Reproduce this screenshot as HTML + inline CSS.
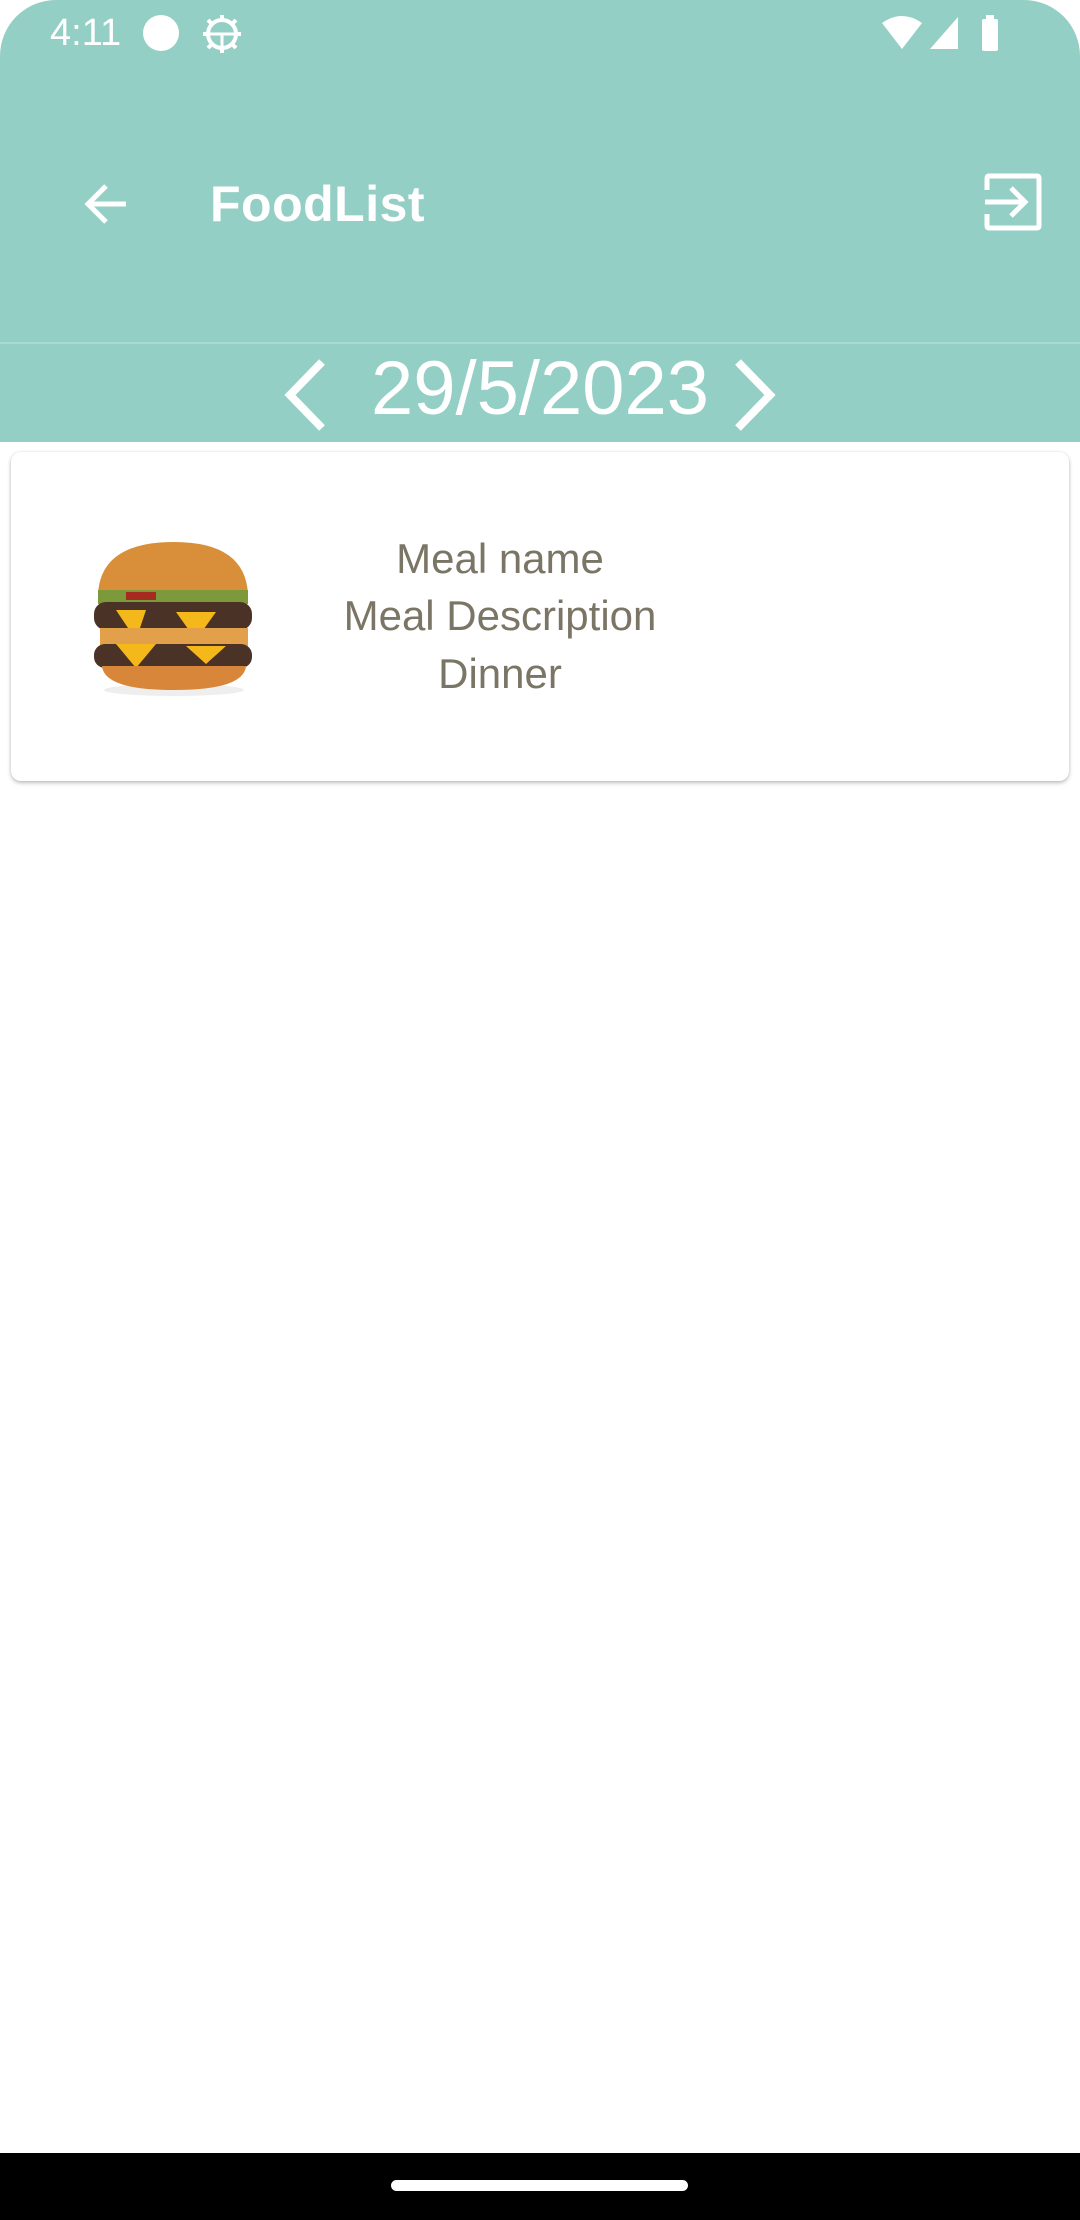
<!DOCTYPE html>
<html><head><meta charset="utf-8"><style>
*{margin:0;padding:0;box-sizing:border-box}
body{width:1080px;height:2220px;background:#fff;position:relative;overflow:hidden;font-family:"Liberation Sans",sans-serif}
.top{position:absolute;left:0;top:0;width:1080px;height:442px;background:#94cfc5;border-radius:56px 56px 0 0}
.div{position:absolute;left:0;top:342px;width:1080px;height:2px;background:#a9d9d1}
.t{position:absolute;color:#fff}
.card{position:absolute;left:11px;top:452px;width:1058px;height:329px;background:#fff;border-radius:10px;box-shadow:0 2px 4px rgba(0,0,0,.25),0 0 2px rgba(0,0,0,.08)}
.txt{position:absolute;left:300px;width:400px;text-align:center;color:#7a7565;font-size:42px}
.nav{position:absolute;left:0;top:2153px;width:1080px;height:67px;background:#000}
.h{position:absolute;left:391px;top:2180px;width:297px;height:11px;border-radius:6px;background:#fff}
</style></head><body>
<div class="top"></div>
<div class="div"></div>
<div class="t" style="left:50px;top:12px;font-size:38px">4:11</div>
<div style="position:absolute;left:143px;top:15px;width:36px;height:36px;border-radius:50%;background:#fff"></div>
<svg style="position:absolute;left:202px;top:14px" width="40" height="40" viewBox="0 0 40 40"><circle cx="20" cy="20" r="14" fill="none" stroke="#fff" stroke-width="4"/><path d="M6 20H34M20 20V34" stroke="#fff" stroke-width="3"/><g stroke="#fff" stroke-width="4"><path d="M20 1v5M20 34v5M1 20h5M34 20h5M6 6l4 4M30 30l4 4M34 6l-4 4M6 34l4-4"/></g></svg>
<svg style="position:absolute;left:880px;top:15px" width="130" height="38" viewBox="0 0 130 38"><path d="M2 8Q22 -6 42 8L22 34Z" fill="#fff"/><path d="M50 34L78 2V34Z" fill="#fff"/><rect x="102" y="4" width="16" height="32" rx="2" fill="#fff"/><rect x="106" y="0" width="8" height="6" fill="#fff"/></svg>
<svg style="position:absolute;left:84px;top:182px" width="46" height="44" viewBox="0 0 46 44"><path d="M42 22H6M22 4L4 22l18 18" fill="none" stroke="#fff" stroke-width="5"/></svg>
<div class="t" style="left:210px;top:175px;font-size:50px;font-weight:bold;letter-spacing:0.5px">FoodList</div>
<svg style="position:absolute;left:983px;top:172px" width="60" height="60" viewBox="0 0 60 60"><path d="M4 18V6Q4 4 6 4h48q2 0 2 2v48q0 2-2 2H6q-2 0-2-2V42" fill="none" stroke="#fff" stroke-width="5"/><path d="M2 30h38M28 16l14 14-14 14" fill="none" stroke="#fff" stroke-width="5"/></svg>
<svg style="position:absolute;left:278px;top:358px" width="50" height="74" viewBox="0 0 50 74"><path d="M44 4L12 37l32 33" fill="none" stroke="#fff" stroke-width="8"/></svg>
<svg style="position:absolute;left:732px;top:358px" width="50" height="74" viewBox="0 0 50 74"><path d="M6 4l32 33-32 33" fill="none" stroke="#fff" stroke-width="8"/></svg>
<div class="t" style="left:340px;width:400px;text-align:center;top:345px;font-size:76px">29/5/2023</div>
<div class="card"></div>
<svg style="position:absolute;left:86px;top:540px" width="180" height="160" viewBox="0 0 180 160">
<ellipse cx="88" cy="150" rx="70" ry="6" fill="#eee"/>
<path d="M12 55Q14 2 88 2Q160 2 162 55Z" fill="#d98f3a"/>
<rect x="12" y="50" width="150" height="14" fill="#7c9a3c"/>
<rect x="40" y="52" width="30" height="8" fill="#a52a20"/>
<rect x="8" y="62" width="158" height="28" rx="12" fill="#4a3226"/>
<path d="M30 70L60 70L50 100ZM90 72L130 72L110 100Z" fill="#f5b81a"/>
<rect x="14" y="88" width="148" height="18" fill="#e3a04b"/>
<rect x="8" y="104" width="158" height="24" rx="11" fill="#4a3226"/>
<path d="M30 104L70 104L50 128ZM100 106L140 106L120 124Z" fill="#f5b81a"/>
<path d="M16 126H160Q158 150 88 150Q18 150 16 126Z" fill="#d8873a"/>
</svg>
<div class="txt" style="top:535px">Meal name</div>
<div class="txt" style="top:592px">Meal Description</div>
<div class="txt" style="top:650px">Dinner</div>
<div class="nav"></div><div class="h"></div>
</body></html>
